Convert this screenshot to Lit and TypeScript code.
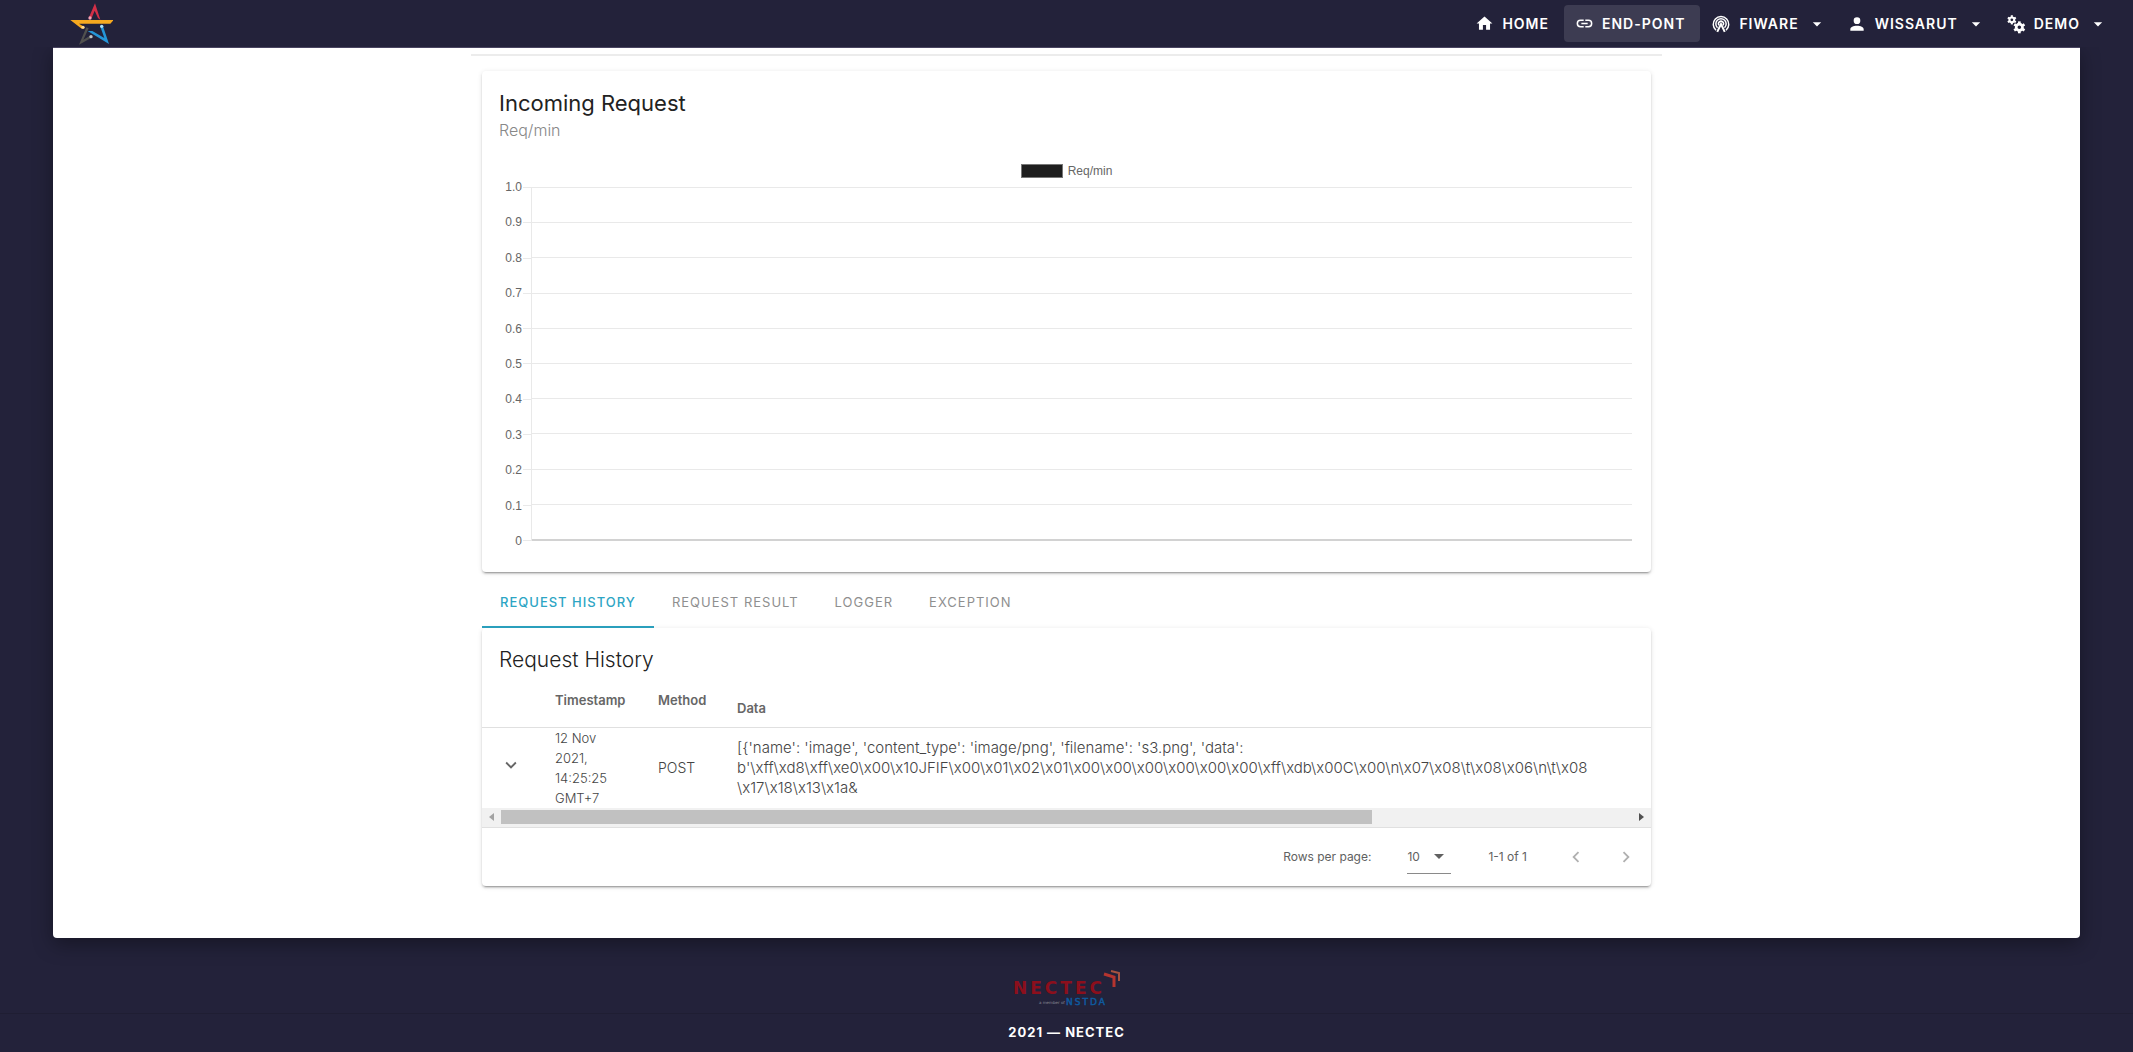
import { LitElement, html, css, svg } from "lit";
import { customElement, state } from "lit/decorators.js";

const ICONS: Record<string, string> = {
  home: "M10 20v-6h4v6h5v-8h3L12 3 2 12h3v8h5z",
  link: "M3.9 12a3.1 3.1 0 0 1 3.1-3.1h4V7H7a5 5 0 0 0 0 10h4v-1.9H7A3.1 3.1 0 0 1 3.9 12zM8 13h8v-2H8v2zm9-6h-4v1.900h4a3.100 3.100 0 0 1 0 6.200h-4V17h4a5 5 0 0 0 0-10z",
  account: "M12 4a4 4 0 0 1 4 4 4 4 0 0 1-4 4 4 4 0 0 1-4-4 4 4 0 0 1 4-4m0 10c4.420 0 8 1.790 8 4v2H4v-2c0-2.210 3.580-4 8-4z",
  menu: "M7 10l5 5 5-5z",
  down: "M7.410 8.580L12 13.170l4.590-4.590L18 10l-6 6-6-6z",
  left: "M15.410 16.580L10.830 12l4.580-4.590L14 6l-6 6 6 6z",
  right: "M8.590 16.580L13.170 12 8.590 7.410 10 6l6 6-6 6z",
};

const icon = (name: string, size: number) => html`<svg
  width=${size} height=${size} viewBox="0 0 24 24" fill="currentColor" aria-hidden="true"
><path d=${ICONS[name]} /></svg>`;

const fingerprint = html`<svg width="20" height="20" viewBox="0 0 24 24" fill="none" stroke="currentColor" stroke-width="1.800" aria-hidden="true">
  <path d="M6 19.500a9.300 9.300 0 1 1 12 0" />
  <path d="M7.800 16.500a6.200 6.200 0 1 1 8.400 0" />
  <path d="M9.600 13.500a3 3 0 1 1 4.800 0" />
  <path d="M7.500 21.500L12 12l4.500 9.500" stroke-width="2.400" />
</svg>`;

const gear = (x: number, y: number, r: number) => svg`<g transform="translate(${x} ${y})">
  <circle r=${r * 0.58} fill="none" stroke="currentColor" stroke-width=${r * 0.5} />
  ${[0, 60, 120, 180, 240, 300].map(
    (a) => svg`<rect x=${-r * 0.25} y=${-r * 1.1} width=${r * 0.5} height=${r * 0.4} transform="rotate(${a})" />`
  )}
</g>`;

const cogs = html`<svg width="20" height="20" viewBox="0 0 24 24" fill="currentColor" aria-hidden="true">
  ${gear(7, 7, 5)}${gear(16, 16, 6.5)}
</svg>`;

const starLogo = html`<svg width="43" height="42" viewBox="57 9 129 126" role="img" aria-label="Home">
  <path d="M132 10L148 59L141 54L131 32L122 54L114 52Z" fill="#d22f47" />
  <path d="M58 60H188L178 71H84L99 80L92 86Z" fill="#f6a91f" />
  <path d="M106 82L113 85L97 119L116 108L120 114L84 134Z" fill="#50504e" />
  <path d="M148 80L156 79L174 132L110 93H124L160 114Z" fill="#2496d9" />
  <circle cx="117" cy="54" r="5" fill="#f6a3b8" /><circle cx="96" cy="82" r="5" fill="#ffd98c" />
  <circle cx="152" cy="79" r="5" fill="#a9def8" /><circle cx="120" cy="110" r="5" fill="#c4c4c4" />
</svg>`;

@customElement("request-chart")
export class RequestChart extends LitElement {
  static styles = css`
    :host { display: block; font: 12px/16px "Liberation Sans", Arial, sans-serif; color: #666; }
    .legend { display: flex; justify-content: center; align-items: center; gap: 5px; margin: 0 0 8px 2px; }
    .swatch { width: 40px; height: 12px; border: 1px solid #777; background: #1e1e1e; }
    .plot { display: grid; grid-template-columns: 24px 8px 1fr; height: 354px; }
    .labels, .ticks, .area { display: flex; flex-direction: column; justify-content: space-between; }
    .labels { margin: -8px 0; text-align: right; padding-right: 1px; }
    .ticks i, .area i { height: 1px; background: #e9e9e9; }
    .area { border-left: 1px solid #e9e9e9; }
    .area i:last-child { height: 2px; background: #d2d2d2; }
  `;
  private values = ["1.0", "0.9", "0.8", "0.7", "0.6", "0.5", "0.4", "0.3", "0.2", "0.1", "0"];
  render() {
    const lines = this.values.map(() => html`<i></i>`);
    return html`
      <div class="legend"><span class="swatch"></span><span>Req/min</span></div>
      <div class="plot">
        <div class="labels">${this.values.map((v) => html`<span>${v}</span>`)}</div>
        <div class="ticks">${lines}</div>
        <div class="area">${lines}</div>
      </div>`;
  }
}

@customElement("app-root")
export class AppRoot extends LitElement {
  static styles = css`
    :host { display: flex; flex-direction: column; min-height: 100vh; background: #23223a; font-family: Inter, sans-serif; color: #616161; }
    * { box-sizing: border-box; }
    button, select { font: inherit; letter-spacing: inherit; color: inherit; background: none; border: 0; padding: 0; margin: 0; }
    a { color: inherit; text-decoration: none; }
    svg { display: block; flex: none; }
    .bar { position: relative; z-index: 1; display: flex; align-items: center; justify-content: space-between; height: 47px; padding: 0 16px 0 70px; background: #23223a; }
    .brand { display: block; }
    .menu { display: flex; align-items: center; color: #fff; font-size: 14px; font-weight: 600; letter-spacing: 1px; }
    .item { display: flex; align-items: center; gap: 8px; height: 37px; padding: 0 15px 0 11px; border-radius: 4px; }
    .item.drop { padding: 0 9px 0 11px; }
    .item.active { background: #3d3c52; }
    .panel { margin: 0 53px; padding: 6px 0 52px; background: #fff; border-top: 1px solid #4a4561; border-radius: 0 0 4px 4px; box-shadow: 0 6px 20px rgba(0, 0, 0, 0.36); }
    .container { max-width: 1191px; margin: 0 auto; border-top: 2px solid #ececec; padding: 15px 11px 0; }
    .card { background: #fff; border-radius: 4px; box-shadow: 0 3px 1px -2px rgba(0, 0, 0, 0.2), 0 2px 2px rgba(0, 0, 0, 0.14), 0 1px 5px rgba(0, 0, 0, 0.12); }
    .chart-card { padding: 16px 19px 31px 17px; }
    .title { margin: 0; font-size: 22px; line-height: 32px; font-weight: 400; color: #222; }
    .sub { margin: 0 0 22px; font-size: 16px; line-height: 22px; font-weight: 300; color: #888; }
    .tabs { display: flex; height: 52px; margin-top: 4px; font-size: 13px; letter-spacing: 1px; color: #8f8f8f; }
    .tab { padding: 2px 18px 0; border-bottom: 2px solid transparent; }
    .tab.on { color: #2da5c4; border-color: #2a9fbc; font-weight: 500; }
    .history .title { font-size: 21px; padding: 16px 17px 8px; font-weight: 300; line-height: 32px; }
    .scroll { overflow: hidden; }
    table { border-collapse: collapse; white-space: nowrap; table-layout: fixed; width: 100%; font-size: 14px; line-height: 20px; font-weight: 300; color: #444; }
    th, td { padding: 0 18px; text-align: left; }
    th { height: 43px; padding-bottom: 10px; font-size: 13px; font-weight: 600; color: #666; border-bottom: 1px solid #e0e0e0; vertical-align: middle; }
    th.data { padding: 6px 18px 0; }
    .c-toggle { width: 55px; }
    .c-time { width: 103px; }
    .c-method { width: 79px; }
    td.time { white-space: normal; font-size: 13px; }
    td.body { font-size: 15px; }
    td.toggle { color: #666; }
    td p { margin: 0; }
    .track { display: flex; align-items: center; height: 19px; background: #f1f1f1; }
    .arrow { display: flex; justify-content: center; width: 19px; color: #a3a3a3; }
    .arrow.end { color: #505050; }
    .rail { flex: 1; }
    .thumb { width: 77%; height: 14px; background: #c1c1c1; }
    .pager { display: flex; align-items: center; justify-content: flex-end; height: 59px; padding-right: 14px; border-top: 1px solid #e0e0e0; font-size: 12px; }
    .rows { display: flex; align-items: center; gap: 36px; margin-right: 37px; }
    .pick { display: grid; align-items: center; width: 44px; height: 34px; border-bottom: 1px solid #8a8a8a; }
    .pick select, .pick svg { grid-area: 1 / 1; }
    .pick svg { justify-self: end; pointer-events: none; }
    .pick select { appearance: none; width: 44px; }
    .pages { display: flex; gap: 28px; margin-left: 38px; color: #b0b0b0; }
    .foot { display: flex; flex-direction: column; align-items: center; padding-top: 30px; color: #fff; }
    .foot p { align-self: stretch; margin: 0; padding: 8px 0; border-top: 1px solid #1f1e33; text-align: center; font-size: 13px; line-height: 20px; font-weight: 700; letter-spacing: 1px; }
  `;

  @state() private tab = 0;
  private tabs = ["REQUEST HISTORY", "REQUEST RESULT", "LOGGER", "EXCEPTION"];
  private data = [
    "[{'name': 'image', 'content_type': 'image/png', 'filename': 's3.png', 'data':",
    "b'\\xff\\xd8\\xff\\xe0\\x00\\x10JFIF\\x00\\x01\\x02\\x01\\x00\\x00\\x00\\x00\\x00\\x00\\xff\\xdb\\x00C\\x00\\n\\x07\\x08\\t\\x08\\x06\\n\\t\\x08",
    "\\x17\\x18\\x13\\x1a&",
  ];

  render() {
    return html`
      <header class="bar">
        <a class="brand" href="#">${starLogo}</a>
        <nav class="menu">
          <a class="item" href="#home">${icon("home", 19)}HOME</a>
          <a class="item active" href="#endpoint">${icon("link", 19)}END-PONT</a>
          <button class="item drop">${fingerprint}FIWARE ${icon("menu", 20)}</button>
          <button class="item drop">${icon("account", 20)}WISSARUT ${icon("menu", 20)}</button>
          <button class="item drop">${cogs}DEMO ${icon("menu", 20)}</button>
        </nav>
      </header>
      <main class="panel">
        <div class="container">
          <section class="card chart-card">
            <h2 class="title">Incoming Request</h2>
            <p class="sub">Req/min</p>
            <request-chart></request-chart>
          </section>
          <div class="tabs" role="tablist">
            ${this.tabs.map(
              (t, i) => html`<button class="tab ${i === this.tab ? "on" : ""}" role="tab"
                aria-selected=${i === this.tab} @click=${() => (this.tab = i)}>${t}</button>`
            )}
          </div>
          <section class="card history">
            <h2 class="title">Request History</h2>
            <div class="scroll">
              <table>
                <colgroup><col class="c-toggle" /><col class="c-time" /><col class="c-method" /><col /></colgroup>
                <thead>
                  <tr><th></th><th>Timestamp</th><th>Method</th><th class="data">Data</th></tr>
                </thead>
                <tbody>
                  <tr>
                    <td class="toggle"><button aria-label="Expand row">${icon("down", 22)}</button></td>
                    <td class="time">12 Nov 2021, 14:25:25 GMT+7</td>
                    <td>POST</td>
                    <td class="body">${this.data.map((l) => html`<p>${l}</p>`)}</td>
                  </tr>
                </tbody>
              </table>
            </div>
            <div class="track" aria-hidden="true">
              <span class="arrow"><svg width="5" height="8" viewBox="0 0 5 8" fill="currentColor"><path d="M5 0V8L0 4Z" /></svg></span>
              <div class="rail"><div class="thumb"></div></div>
              <span class="arrow end"><svg width="5" height="8" viewBox="0 0 5 8" fill="currentColor"><path d="M0 0V8L5 4Z" /></svg></span>
            </div>
            <div class="pager">
              <label class="rows">Rows per page:
                <span class="pick"><select><option>10</option><option>25</option></select>${icon("menu", 24)}</span>
              </label>
              <span>1-1 of 1</span>
              <div class="pages">
                <button aria-label="Previous page">${icon("left", 22)}</button>
                <button aria-label="Next page">${icon("right", 22)}</button>
              </div>
            </div>
          </section>
        </div>
      </main>
      <footer class="foot">
        <svg width="112" height="45" viewBox="0 0 112 45" role="img" aria-label="NECTEC, a member of NSTDA">
          <g font-family="DejaVu Sans, sans-serif">
            <text x="2" y="26" font-size="17" font-weight="700" letter-spacing="3" fill="#8c0f1c">NECTEC</text>
            <text x="55" y="37" font-size="9" letter-spacing="2" fill="#0f5a9e" stroke="#0f5a9e" stroke-width="0.5">NSTDA</text>
            <text x="28" y="36" font-size="4" fill="#8d8d99">a member of</text>
          </g>
          <path d="M93 6L103 9V19" fill="none" stroke="#b5342f" stroke-width="3" />
          <path d="M100 3L108 5V13" fill="none" stroke="#a85340" stroke-width="2" />
        </svg>
        <p>2021 — NECTEC</p>
      </footer>`;
  }
}
